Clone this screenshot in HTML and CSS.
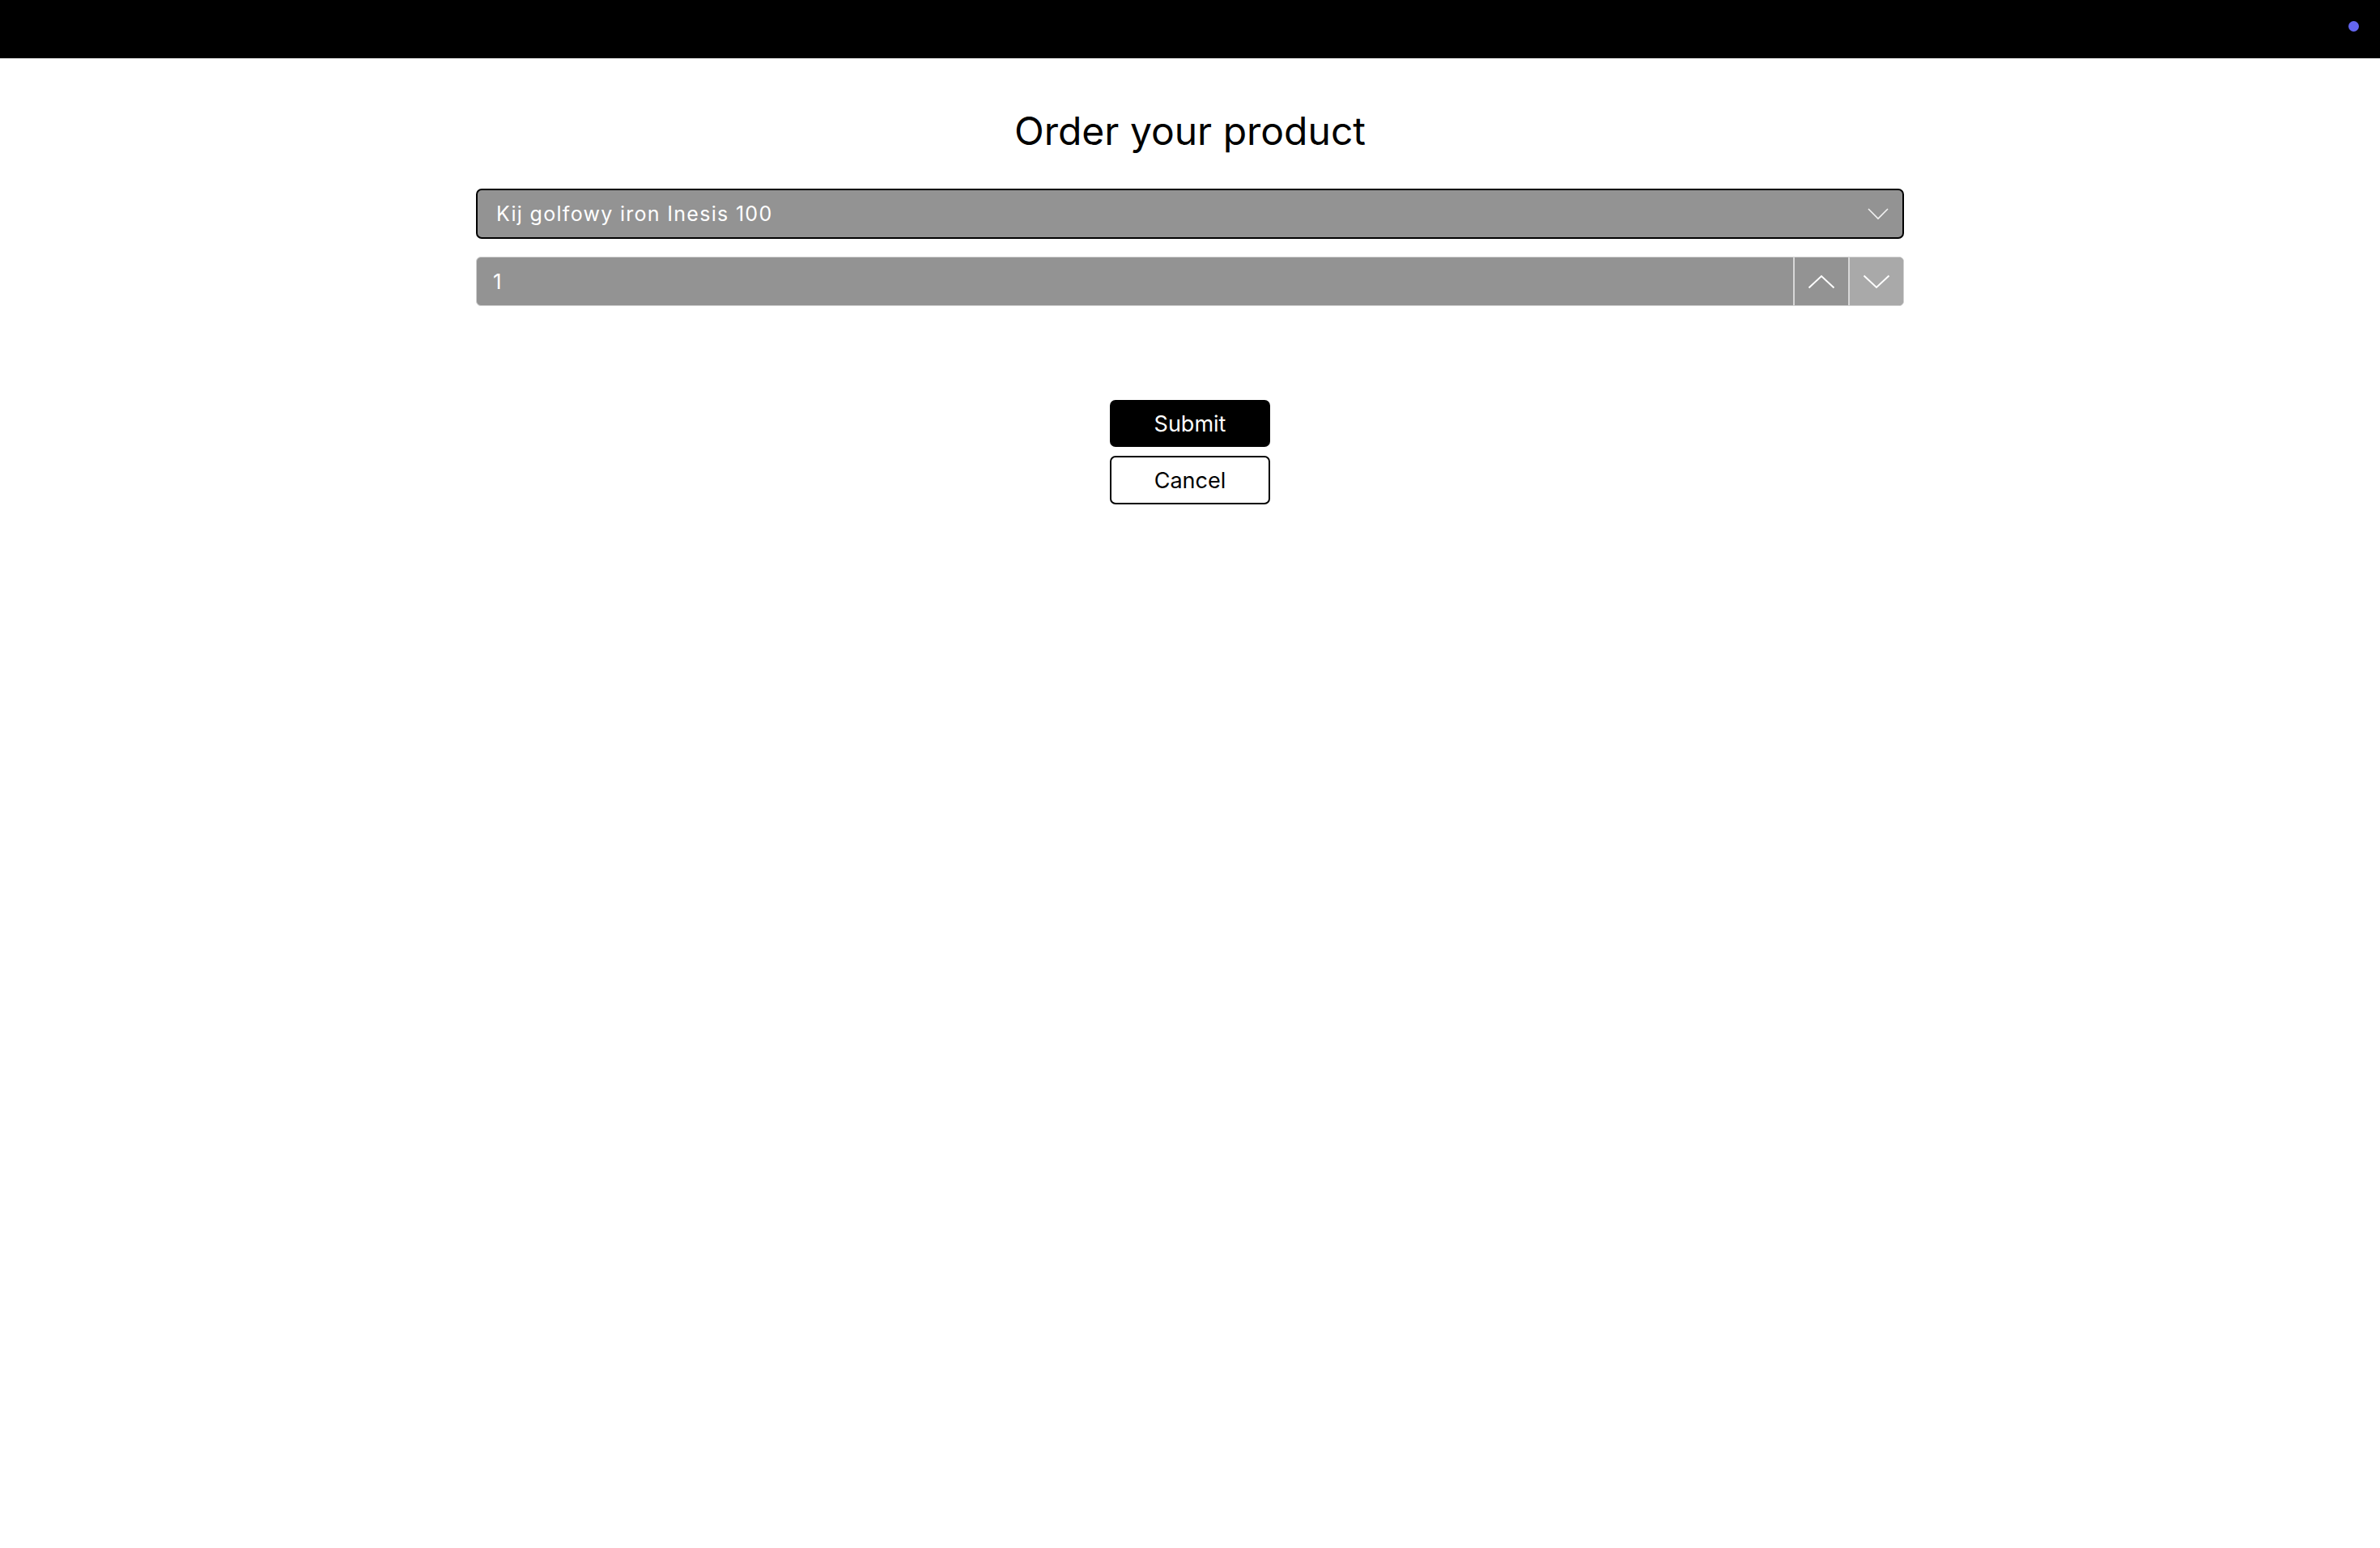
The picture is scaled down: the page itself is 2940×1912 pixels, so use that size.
FILE: index.html
```html
<!DOCTYPE html>
<html lang="en">
<head>
<meta charset="utf-8">
<title>Order your product</title>
<link rel="stylesheet" href="styles.css">
</head>
<body>
<header class="topbar">
  <span class="status-dot"></span>
</header>
<main class="order">
  <h1 class="order-title">Order your product</h1>
  <div class="field-select">
    <span class="field-select-value">Kij golfowy iron Inesis 100</span>
    <svg class="field-select-chevron" width="26" height="15" viewBox="0 0 26 15"><path d="M1 1 L13 13 L25 1" fill="none" stroke="#f2f2f2" stroke-width="1.6"/></svg>
  </div>
  <div class="field-number">
    <span class="field-number-value">1</span>
    <div class="stepper stepper-up">
      <svg width="34" height="18" viewBox="0 0 34 18"><path d="M1.5 16.5 L17 2 L32.5 16.5" fill="none" stroke="#fff" stroke-width="2"/></svg>
    </div>
    <div class="stepper stepper-down">
      <svg width="34" height="18" viewBox="0 0 34 18"><path d="M1.5 1.5 L17 16 L32.5 1.5" fill="none" stroke="#fff" stroke-width="2"/></svg>
    </div>
  </div>
  <div class="actions">
    <button class="btn btn-primary" type="button">Submit</button>
    <button class="btn btn-secondary" type="button">Cancel</button>
  </div>
</main>
</body>
</html>
```

FILE: styles.css
```css
* { box-sizing: border-box; }
html, body { margin: 0; padding: 0; background: #fff; }
body {
  font-family: Inter, "Noto Sans", "Liberation Sans", sans-serif;
  color: #000;
}
.topbar {
  height: 72px;
  background: #000;
  display: flex;
  justify-content: flex-end;
  align-items: flex-start;
  padding: 26px 26px 0 0;
}
.status-dot {
  width: 13px;
  height: 13px;
  border-radius: 50%;
  background: #6466f0;
}
.order {
  width: 1764px;
  margin: 0 auto;
  display: flex;
  flex-direction: column;
  align-items: stretch;
}
.order-title {
  margin: 0;
  padding-top: 61px;
  font-size: 48px;
  line-height: 58px;
  font-weight: 400;
  text-align: center;
}
.field-select {
  margin-top: 42px;
  height: 62px;
  border: 2px solid #000;
  border-radius: 7px;
  background: #939393;
  display: flex;
  align-items: center;
  justify-content: space-between;
  padding: 0 17px 0 23px;
}
.field-select-value {
  color: #fff;
  font-size: 25px;
  letter-spacing: 1.3px;
}
.field-number {
  margin-top: 22px;
  height: 61px;
  border: 1px solid #d0d0d0;
  border-radius: 6px;
  background: #939393;
  display: flex;
  align-items: stretch;
  overflow: hidden;
}
.field-number-value {
  flex: 1;
  display: flex;
  align-items: center;
  padding-left: 20px;
  color: #fff;
  font-size: 26px;
}
.stepper {
  width: 68px;
  display: flex;
  align-items: center;
  justify-content: center;
  border-left: 2px solid #d8d8d8;
}
.stepper-up { background: #939393; }
.stepper-down { background: #a9a9a9; }
.actions {
  margin-top: 116px;
  display: flex;
  flex-direction: column;
  align-items: center;
  gap: 11px;
}
.btn {
  width: 198px;
  height: 58px;
  border-radius: 7px;
  font-family: Inter, "Noto Sans", "Liberation Sans", sans-serif;
  font-size: 27px;
  padding: 0;
  cursor: pointer;
}
.btn-primary {
  background: #000;
  color: #fff;
  border: none;
}
.btn-secondary {
  height: 60px;
  background: #fff;
  color: #000;
  border: 2px solid #000;
}
```
